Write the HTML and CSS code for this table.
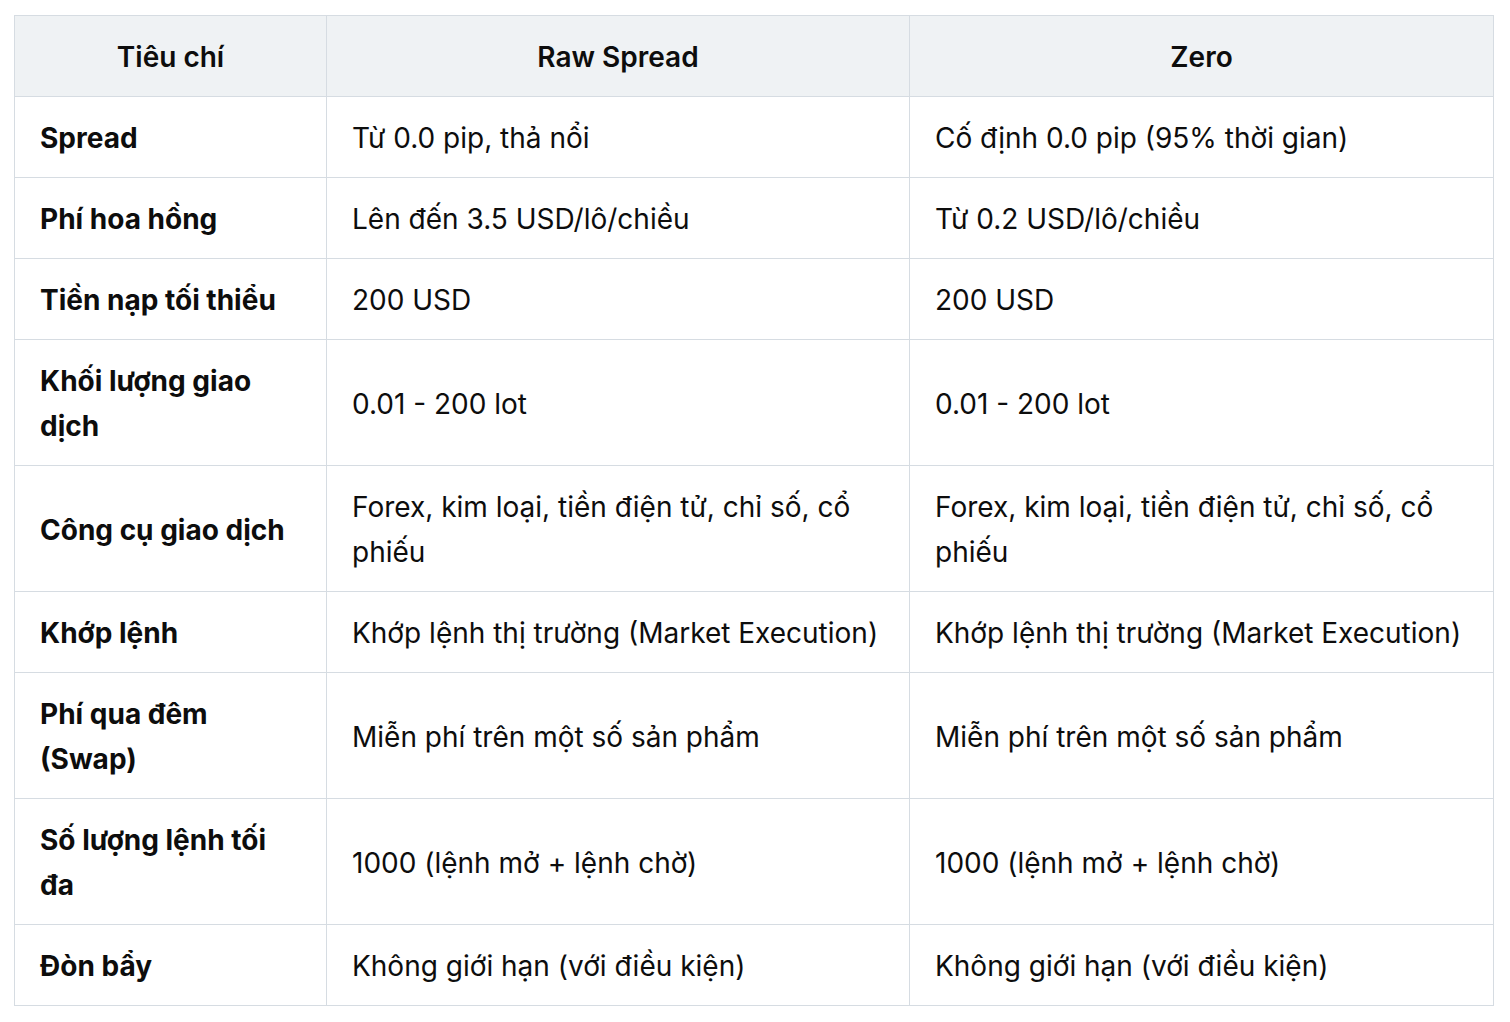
FILE: index.html
```html
<!DOCTYPE html>
<html lang="vi">
<head>
<meta charset="utf-8">
<link rel="stylesheet" href="styles.css">
</head>
<body>
<table class="cmp">
  <colgroup>
    <col class="c1"><col class="c2"><col class="c3">
  </colgroup>
  <thead>
    <tr><th>Tiêu chí</th><th>Raw Spread</th><th>Zero</th></tr>
  </thead>
  <tbody>
    <tr><td class="k">Spread</td><td>Từ 0.0 pip, thả nổi</td><td>Cố định 0.0 pip (95% thời gian)</td></tr>
    <tr><td class="k">Phí hoa hồng</td><td>Lên đến 3.5 USD/lô/chiều</td><td>Từ 0.2 USD/lô/chiều</td></tr>
    <tr><td class="k">Tiền nạp tối thiểu</td><td>200 USD</td><td>200 USD</td></tr>
    <tr><td class="k">Khối lượng giao dịch</td><td>0.01 - 200 lot</td><td>0.01 - 200 lot</td></tr>
    <tr><td class="k">Công cụ giao dịch</td><td>Forex, kim loại, tiền điện tử, chỉ số, cổ phiếu</td><td>Forex, kim loại, tiền điện tử, chỉ số, cổ phiếu</td></tr>
    <tr><td class="k">Khớp lệnh</td><td>Khớp lệnh thị trường (Market Execution)</td><td>Khớp lệnh thị trường (Market Execution)</td></tr>
    <tr><td class="k">Phí qua đêm (Swap)</td><td>Miễn phí trên một số sản phẩm</td><td>Miễn phí trên một số sản phẩm</td></tr>
    <tr><td class="k">Số lượng lệnh tối đa</td><td>1000 (lệnh mở + lệnh chờ)</td><td>1000 (lệnh mở + lệnh chờ)</td></tr>
    <tr><td class="k">Đòn bẩy</td><td>Không giới hạn (với điều kiện)</td><td>Không giới hạn (với điều kiện)</td></tr>
  </tbody>
</table>
</body>
</html>
```

FILE: styles.css
```css
html, body {
  margin: 0;
  padding: 0;
  background: #ffffff;
}
body {
  padding: 15px 0 0 14px;
  font-family: Inter, "Noto Sans", sans-serif;
  color: #0d0d0d;
}
.cmp {
  border-collapse: collapse;
  table-layout: fixed;
  width: 1479px;
  font-size: 28px;
  line-height: 45px;
}
.c1 { width: 312px; }
.c2 { width: 583px; }
.c3 { width: 584px; }
.cmp th, .cmp td {
  border: 1px solid #d6dce2;
  padding: 19px 25px 16px;
  text-align: left;
  vertical-align: middle;
}
.cmp th {
  background: #eff2f4;
  font-weight: 600;
  text-align: center;
}
.cmp td.k {
  font-weight: 700;
}
```
